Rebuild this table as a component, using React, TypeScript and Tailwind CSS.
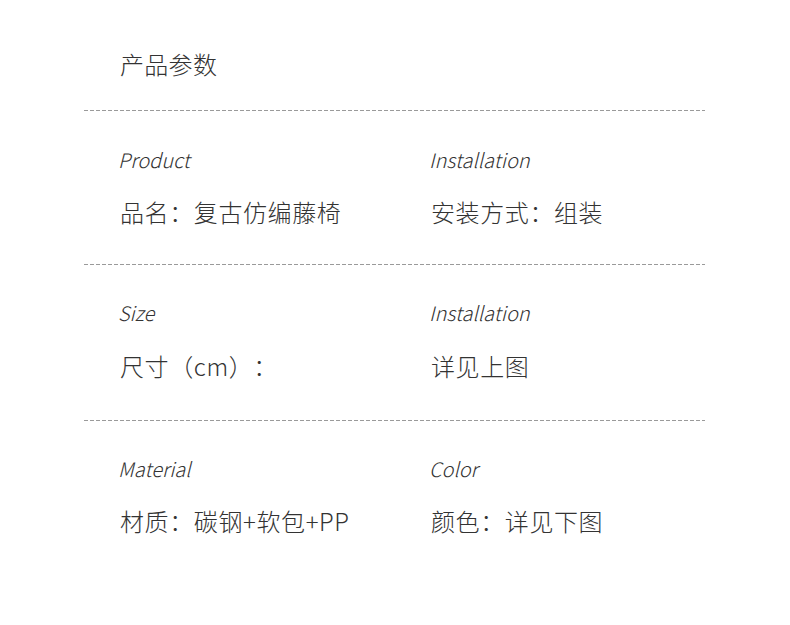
import React from "react";

const rows = [
  { l1: "Product", v1: "品名：复古仿编藤椅", l2: "Installation", v2: "安装方式：组装", pt: "pt-[37px]", mt: "mt-[28px]", lineMt: "mt-[34px]" },
  { l1: "Size", v1: "尺寸（cm）：", l2: "Installation", v2: "详见上图", pt: "pt-[36px]", mt: "mt-[29px]", lineMt: "mt-[40px]" },
  { l1: "Material", v1: "材质：碳钢+软包+PP", l2: "Color", v2: "颜色：详见下图", pt: "pt-[36px]", mt: "mt-[28px]", lineMt: "mt-[42px]" },
];

const font = { fontFamily: '"Noto Sans CJK SC", "Noto Sans", sans-serif' };

export default function App() {
  return (
    <div className="w-[790px] h-[625px] bg-white text-[#333] [text-spacing-trim:space-all]" style={font}>
      <div className="pl-[120px] pt-[52px] text-[24px] leading-[24px] font-light tracking-[0.3px]">产品参数</div>
      <div className="mx-[84px] w-[621px]">
        {rows.map((r, i) => (
          <div key={i}>
            <div className={`h-px bg-[linear-gradient(to_right,#9a9a9a_4px,transparent_4px)] bg-[length:6px_1px] bg-repeat-x ${r.lineMt}`} />
            <div className={`grid grid-cols-[311px_1fr] pl-[36px] ${r.pt}`}>
              <div>
                <div className="text-[20px] leading-[24px] italic font-light text-[#333] -ml-[2px]">{r.l1}</div>
                <div className={`${r.mt} text-[24px] leading-[24px] font-light tracking-[0.6px]`}>{r.v1}</div>
              </div>
              <div>
                <div className="text-[20px] leading-[24px] italic font-light text-[#333] -ml-[2px]">{r.l2}</div>
                <div className={`${r.mt} text-[24px] leading-[24px] font-light tracking-[0.6px]`}>{r.v2}</div>
              </div>
            </div>
          </div>
        ))}
      </div>
    </div>
  );
}
